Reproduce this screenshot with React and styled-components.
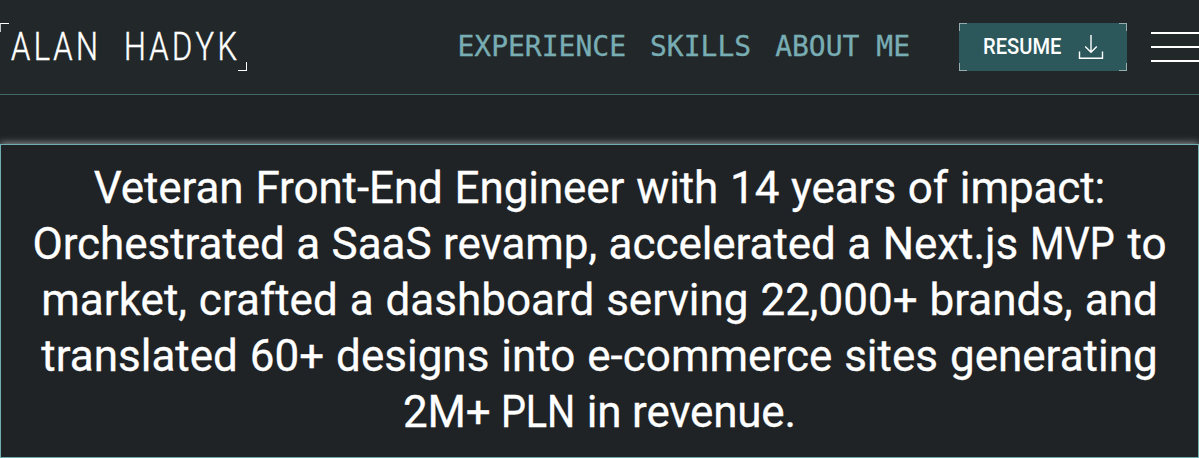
import React from "react";
import styled, { createGlobalStyle } from "styled-components";

const GlobalStyle = createGlobalStyle`
  *, *::before, *::after { box-sizing: border-box; }
  body { margin: 0; background: #1f2325; color: #fff; overflow: hidden; font-family: Roboto, sans-serif; }
`;

const Header = styled.header`
  display: flex;
  align-items: center;
  height: 95px;
  background: #22282a;
  border-bottom: 1px solid #43696d;
`;

const Logo = styled.a`
  position: relative;
  flex: none;
  display: flex;
  align-items: center;
  width: 247px;
  height: 48px;
  padding-left: 10.5px;
  &::before, &::after { content: ""; position: absolute; width: 9px; height: 9px; }
  &::before { left: 0; top: 0; border-left: 1px solid #c4c7c7; border-top: 1px solid #fff; }
  &::after { right: 0; bottom: 0; border-right: 1px solid #fff; border-bottom: 1px solid #fff; }
`;

const LogoText = styled.span`
  font: 300 38.6px/48px Roboto, sans-serif;
  letter-spacing: 4.2px;
  word-spacing: 15px;
  font-kerning: none;
  white-space: nowrap;
  -webkit-text-stroke: 0.5px #fff;
  transform: scaleX(0.8);
  transform-origin: left center;
`;

const Nav = styled.nav`
  display: flex;
  flex: none;
  gap: 24px;
  margin-left: auto;
  margin-right: 48.6px;
`;

const NavLink = styled.a`
  font: 400 28px/36px "DejaVu Sans Mono", monospace;
  color: #78adb4;
  -webkit-text-stroke: 0.3px #78adb4;
  white-space: nowrap;
`;

const ResumeButton = styled.a`
  position: relative;
  display: flex;
  flex: none;
  align-items: center;
  justify-content: space-between;
  width: 168.4px;
  height: 48px;
  padding: 0 23px 0 24px;
  margin-right: 24px;
  background: #2c585c;
`;

const Corner = styled.i`
  position: absolute;
  width: 8px;
  height: 8px;
  border: 0 solid #96acae;
  ${(p) => p.$y}: 0;
  ${(p) => p.$x}: 0;
  border-${(p) => p.$y}-width: 1px;
  border-${(p) => p.$x}-width: 1px;
`;

const ResumeLabel = styled.span`
  width: 80px;
  padding-bottom: 2px;
  font: 500 22.5px/28px Roboto, sans-serif;
  white-space: nowrap;
  transform: scaleX(0.895);
  transform-origin: left center;
`;

const MenuButton = styled.span`
  display: flex;
  flex: none;
  flex-direction: column;
  gap: 12px;
  width: 48px;
`;

const MenuBar = styled.i`
  height: 2px;
  background: #fff;
`;

const Hero = styled.main`
  height: 314px;
  margin-top: 49px;
  padding-top: 15px;
  border: 1px solid #70adb0;
  box-shadow: 0 0 8px rgba(255, 255, 255, 0.65);
  background: #1f2325;
`;

const Headline = styled.h1`
  display: flex;
  flex-direction: column;
  align-items: center;
  margin: 0;
  font: 400 44px/56px Roboto, sans-serif;
  -webkit-text-stroke: 0.3px #fff;
`;

const Line = styled.span`
  display: block;
  white-space: nowrap;
  letter-spacing: ${(p) => p.$tracking}px;
  word-spacing: ${(p) => p.$gap || 0}px;
`;

const Acronym = styled.span`
  display: inline-block;
  margin-right: -7.5px;
  transform: scaleX(0.9);
  transform-origin: left center;
`;

const lines = [
  { text: "Veteran Front-End Engineer with 14 years of impact:", tracking: -0.1, gap: 1 },
  { text: <>Orchestrated a SaaS revamp, accelerated a Next.js <Acronym>MVP</Acronym> to</>, tracking: -0.05, gap: 0.6 },
  { text: "market, crafted a dashboard serving 22,000+ brands, and", tracking: 0, gap: 1 },
  { text: "translated 60+ designs into e-commerce sites generating", tracking: 0, gap: 1 },
  { text: <>2M+ <Acronym>PLN</Acronym> in revenue.</>, tracking: -0.2 },
];

export default function App() {
  return (
    <>
      <GlobalStyle />
      <Header>
        <Logo><LogoText>ALAN HADYK</LogoText></Logo>
        <Nav>
          <NavLink>EXPERIENCE</NavLink>
          <NavLink>SKILLS</NavLink>
          <NavLink>ABOUT ME</NavLink>
        </Nav>
        <ResumeButton>
          <Corner $x="left" $y="top" />
          <Corner $x="right" $y="top" />
          <Corner $x="left" $y="bottom" />
          <Corner $x="right" $y="bottom" />
          <ResumeLabel>RESUME</ResumeLabel>
          <svg width="26" height="26" viewBox="0 0 26 26" fill="none" stroke="#fff" strokeWidth="1.4">
            <path d="M13 1v17M7.2 12.5l5.8 5.7 5.8-5.7M1.5 17.5v6.7h23v-6.7" />
          </svg>
        </ResumeButton>
        <MenuButton><MenuBar /><MenuBar /><MenuBar /></MenuButton>
      </Header>
      <Hero>
        <Headline>
          {lines.map((l, i) => <Line key={i} $tracking={l.tracking} $gap={l.gap}>{l.text} </Line>)}
        </Headline>
      </Hero>
    </>
  );
}
